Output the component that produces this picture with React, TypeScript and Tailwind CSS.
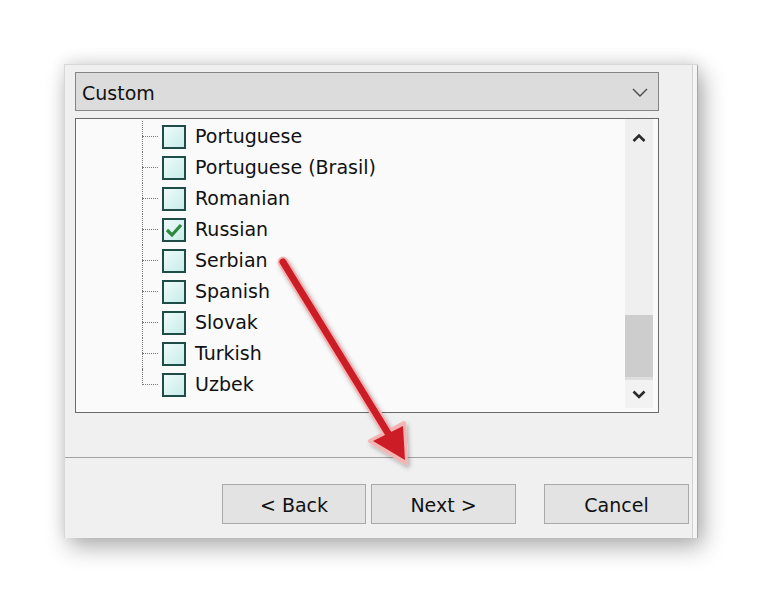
import React from "react";

const langs = [
  { name: "Portuguese", checked: false },
  { name: "Portuguese (Brasil)", checked: false },
  { name: "Romanian", checked: false },
  { name: "Russian", checked: true },
  { name: "Serbian", checked: false },
  { name: "Spanish", checked: false },
  { name: "Slovak", checked: false },
  { name: "Turkish", checked: false },
  { name: "Uzbek", checked: false },
];

function Row({ name, checked, last }: { name: string; checked: boolean; last: boolean }) {
  return (
    <div className="h-[31px] flex items-center pl-[66px]">
      <div className="relative w-[20px] h-full flex items-center">
        <div
          className={
            last
              ? "absolute left-0 top-0 h-1/2 border-l border-dotted border-[#7a7a7a]"
              : "absolute left-0 top-0 h-full border-l border-dotted border-[#7a7a7a]"
          }
        />
        <div className="w-[16px] border-t border-dotted border-[#7a7a7a]" />
      </div>
      <div className="w-[24px] h-[24px] border-2 border-[#1f4c47] bg-gradient-to-br from-[#effbfa] to-[#c6ecea] flex items-center justify-center">
        {checked && (
          <svg width="18" height="16" viewBox="0 0 18 16">
            <path d="M2 8 L7 13 L16 3" fill="none" stroke="#2d8a3c" strokeWidth="3.2" strokeLinejoin="miter" />
          </svg>
        )}
      </div>
      <span className="ml-[9px] text-[19px] leading-none text-[#111]">{name}</span>
    </div>
  );
}

export default function App() {
  return (
    <div className="w-[762px] h-[600px] bg-white relative overflow-hidden pl-[64px] pt-[64px] font-['DejaVu_Sans',sans-serif]">
      <div className="w-[634px] h-[474px] flex bg-[#f0f0f0] border-t border-l border-[#d8d8d8] shadow-[5px_9px_22px_rgba(0,0,0,0.32),0_-4px_14px_rgba(0,0,0,0.08)]">
        <div className="flex-1 flex flex-col">
          <div className="pl-[10px] pt-[7px]">
            {/* Combo box */}
            <div className="w-[584px] h-[39px] bg-[#dcdcdc] border border-[#858585] flex items-center justify-between pl-[6px] pr-[10px]">
              <span className="text-[19px] leading-none text-[#111] pt-[3px]">Custom</span>
              <svg width="16" height="9" viewBox="0 0 16 9" className="mt-[2px]">
                <polyline points="1,1 8,8 15,1" fill="none" stroke="#4a4a4a" strokeWidth="1.4" />
              </svg>
            </div>
            {/* List box */}
            <div className="mt-[7px] w-[584px] h-[295px] bg-[#fafafa] border border-[#6a6a6a] flex">
              <div className="flex-1 pt-[2px]">
                {langs.map((l, i) => (
                  <Row key={l.name} name={l.name} checked={l.checked} last={i === langs.length - 1} />
                ))}
              </div>
              <div className="w-[28px] mr-[5px] flex flex-col mb-[4px]">
                <div className="h-[36px] flex items-center justify-center bg-[#efefef]">
                  <svg width="14" height="9" viewBox="0 0 14 9">
                    <polyline points="1.5,8 7,2.5 12.5,8" fill="none" stroke="#2a2a2a" strokeWidth="2.6" />
                  </svg>
                </div>
                <div className="flex-1 bg-[#efefef] flex flex-col">
                  <div className="mt-[160px] h-[62px] bg-[#cdcdcd]" />
                  <div className="h-[3px] bg-[#dedede]" />
                </div>
                <div className="h-[28px] flex items-center justify-center bg-[#f2f2f2]">
                  <svg width="14" height="9" viewBox="0 0 14 9">
                    <polyline points="1.5,1.5 7,7 12.5,1.5" fill="none" stroke="#2a2a2a" strokeWidth="2.6" />
                  </svg>
                </div>
              </div>
            </div>
          </div>
          {/* separator */}
          <div className="mt-[44px] h-px bg-[#a3a3a3] mr-[-4px]" />
          {/* buttons */}
          <div className="pt-[26px] pr-[3px] flex justify-end">
            <button className="w-[144px] h-[40px] bg-[#e3e3e3] border border-[#a9a9a9] text-[19px] text-[#111] leading-none pt-[2px]">
              &lt; Back
            </button>
            <button className="ml-[5px] w-[145px] h-[40px] bg-[#e3e3e3] border border-[#a9a9a9] text-[19px] text-[#111] leading-none pt-[2px]">
              Next &gt;
            </button>
            <button className="ml-[28px] w-[145px] h-[40px] bg-[#e3e3e3] border border-[#a9a9a9] text-[19px] text-[#111] leading-none pt-[2px]">
              Cancel
            </button>
          </div>
        </div>
        <div className="w-[6px] border-l border-r border-l-[#d2d2d2] border-r-[#a6a6a6] bg-[#f5f5f5]" />
      </div>

      {/* red arrow overlay */}
      <svg className="absolute left-0 top-0 pointer-events-none" width="762" height="600" viewBox="0 0 762 600">
        <defs>
          <filter id="sh" x="-20%" y="-20%" width="140%" height="140%">
            <feDropShadow dx="2" dy="3" stdDeviation="2" floodColor="#000" floodOpacity="0.25" />
          </filter>
        </defs>
        <g filter="url(#sh)">
          <line x1="283" y1="262" x2="394" y2="443" stroke="#f4b4b4" strokeWidth="11" strokeLinecap="round" />
          <polygon points="406,463 370,441 404,423" fill="#f4b4b4" stroke="#f4b4b4" strokeWidth="4" strokeLinejoin="round" />
          <line x1="283" y1="262" x2="394" y2="443" stroke="#cc1e26" strokeWidth="7" strokeLinecap="round" />
          <polygon points="405,460 373,441 403,426" fill="#cc1e26" />
        </g>
      </svg>
    </div>
  );
}
